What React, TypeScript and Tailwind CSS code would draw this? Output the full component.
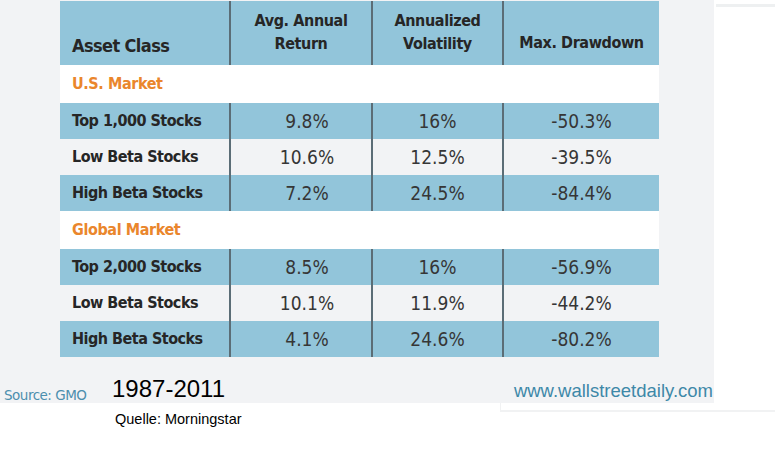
const rows = [
  { type: "section", label: "U.S. Market" },
  { type: "data", label: "Top 1,000 Stocks", ret: "9.8%", vol: "16%", dd: "-50.3%", blue: true },
  { type: "data", label: "Low Beta Stocks", ret: "10.6%", vol: "12.5%", dd: "-39.5%", blue: false },
  { type: "data", label: "High Beta Stocks", ret: "7.2%", vol: "24.5%", dd: "-84.4%", blue: true },
  { type: "section", label: "Global Market" },
  { type: "data", label: "Top 2,000 Stocks", ret: "8.5%", vol: "16%", dd: "-56.9%", blue: true },
  { type: "data", label: "Low Beta Stocks", ret: "10.1%", vol: "11.9%", dd: "-44.2%", blue: false },
  { type: "data", label: "High Beta Stocks", ret: "4.1%", vol: "24.6%", dd: "-80.2%", blue: true },
];

const cond = "font-['Liberation_Sans_Narrow','DejaVu_Sans_Condensed',sans-serif]";

export default function App() {
  return (
    <div className="relative h-[451px] w-[775px] overflow-hidden bg-white font-['Liberation_Sans',Arial,sans-serif]">
      {/* faint scan edges */}
      <div className="absolute left-[716px] top-[4px] h-[3px] w-[60px] bg-[#eef0f1]" />
      <div className="absolute left-[500px] top-[403px] h-[9px] w-[275px] border-b-2 border-l border-[#f1f2f3]" />

      <div className="flex h-[403px] w-[714px] flex-col bg-[#f2f3f5] pl-[60px] pt-px">
        <div className={`w-[599px] text-[#262626] ${cond}`}>
          {/* header */}
          <div className="grid h-[64px] grid-cols-[169px_142px_131px_157px] bg-[#92c5da] font-bold">
            <div className="flex items-end pb-[10px] pl-[12px] text-[18px] leading-none tracking-[-0.6px]">Asset Class</div>
            <div className="flex items-end justify-center border-l-2 border-[#5b6d76] pb-[10px] text-center text-[16px] leading-[23px] tracking-[-0.4px]">
              Avg. Annual<br />Return
            </div>
            <div className="flex items-end justify-center border-l-2 border-[#5b6d76] pb-[10px] text-center text-[16px] leading-[23px] tracking-[-0.4px]">
              Annualized<br />Volatility
            </div>
            <div className="flex items-end justify-center border-l-2 border-[#5b6d76] pb-[11px] text-[16px] leading-[23px] tracking-[-0.4px]">
              Max. Drawdown
            </div>
          </div>

          {rows.map((r, i) =>
            r.type === "section" ? (
              <div key={i} className="flex h-[38px] items-center bg-white pl-[12px] text-[16px] font-bold tracking-[-0.4px] text-[#ea862c]">
                {r.label}
              </div>
            ) : (
              <div
                key={i}
                className={`grid h-[36px] grid-cols-[169px_142px_131px_157px] items-stretch ${r.blue ? "bg-[#92c5da]" : "bg-[#f2f3f5]"}`}
              >
                <div className="flex items-center pl-[12px] text-[16px] font-bold tracking-[-0.5px]">{r.label}</div>
                <div className="flex items-center justify-center border-l-2 border-[#5b6d76] pl-[12px] text-[19px] text-[#363636]">{r.ret}</div>
                <div className="flex items-center justify-center border-l-2 border-[#5b6d76] text-[19px] text-[#363636]">{r.vol}</div>
                <div className="flex items-center justify-center border-l-2 border-[#5b6d76] text-[19px] text-[#363636]">{r.dd}</div>
              </div>
            )
          )}
        </div>

        <div className="relative mt-auto flex h-[44px] items-end">
          <span className="absolute bottom-[-2px] left-[-56px] font-['DejaVu_Sans',sans-serif] text-[13.5px] tracking-[-0.5px] text-[#4c8fae]">Source: GMO</span>
          <span className="mb-[2px] ml-[52px] text-[24px] leading-none text-black">1987-2011</span>
          <span className="mb-[3px] ml-auto mr-[1px] text-[18.5px] leading-none text-[#3e88a8]">www.wallstreetdaily.com</span>
        </div>
      </div>

      <div className="pl-[115px] pt-[9px] text-[14.5px] leading-none text-black">Quelle: Morningstar</div>
    </div>
  );
}
